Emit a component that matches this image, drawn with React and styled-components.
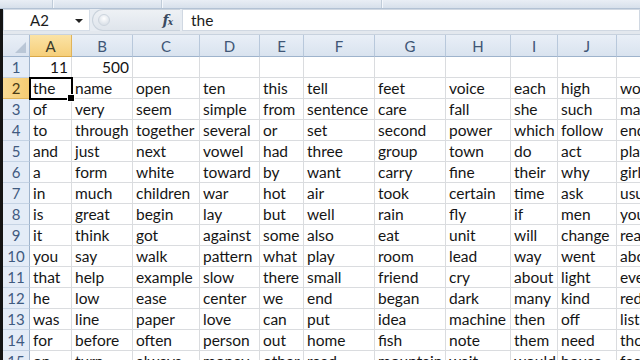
import React from "react";
import styled, { createGlobalStyle } from "styled-components";

const GlobalStyle = createGlobalStyle`
  html, body { margin: 0; padding: 0; background: #ffffff; overflow: hidden; }
  * { box-sizing: border-box; }
`;

const FONT = `"Lato", "Open Sans", "Liberation Sans", sans-serif`;

const Screen = styled.div`
  width: 640px;
  height: 360px;
  overflow: hidden;
  display: flex;
  flex-direction: column;
  background: #fff;
  font-family: ${FONT};
`;

const RibbonEdge = styled.div`
  height: 9px;
  flex: none;
  display: flex;
  background: linear-gradient(#e9eef5, #d7e0eb);
  border-bottom: 1px solid #b3c2d4;
`;

const RibbonGroup = styled.div`
  width: ${(p) => p.$w}px;
  flex: none;
  border-right: 1px solid #c0ccd9;
  box-shadow: 1px 0 0 #f4f7fb;
`;

const Body = styled.div`
  flex: 1;
  display: flex;
  flex-direction: column;
  border-left: 3px solid #141414;
  min-height: 0;
`;

const FormulaBar = styled.div`
  height: 22px;
  flex: none;
  display: flex;
  align-items: stretch;
  background: #e7ecf2;
`;

const NameBox = styled.div`
  width: 87px;
  flex: none;
  display: flex;
  align-items: center;
  background: #fff;
  border: 1px solid #d5dde7;
  padding-left: 26px;
  font-size: 15px;
  color: #1c1c1c;
  position: relative;
`;

const DropArrow = styled.span`
  position: absolute;
  right: 6px;
  top: 9px;
  width: 0;
  height: 0;
  border-left: 4px solid transparent;
  border-right: 4px solid transparent;
  border-top: 4px solid #222;
`;

const Splitter = styled.div`
  width: 88px;
  flex: none;
  display: flex;
  align-items: center;
  justify-content: flex-end;
  padding-right: 8px;
  margin-left: 2px;
  border-radius: 11px 0 0 11px;
  background: linear-gradient(#eef1f5, #dfe5ec);
  border: 1px solid #c9d2dc;
  border-right: none;
  position: relative;
`;

const Grip = styled.span`
  position: absolute;
  left: 5px;
  top: 4px;
  width: 12px;
  height: 12px;
  border-radius: 50%;
  background: radial-gradient(circle at 50% 35%, #ffffff, #dde3ea 70%);
  border: 1px solid #cdd5de;
`;

const Fx = styled.span`
  font-family: "DejaVu Serif", "Liberation Serif", serif;
  font-style: italic;
  font-weight: bold;
  font-size: 14px;
  color: #3a4a60;
  letter-spacing: -1px;
  & small { font-size: 9px; }
`;

const Input = styled.div`
  flex: 1;
  display: flex;
  align-items: center;
  background: #fff;
  border: 1px solid #d0d8e2;
  margin-left: 2px;
  padding-left: 8px;
  font-size: 15.5px;
  color: #1c1c1c;
`;

const BarGap = styled.div`
  height: 4px;
  flex: none;
  background: #e3e8ee;
  border-bottom: 1px solid #c8d2de;
`;

const Sheet = styled.div`
  display: grid;
  grid-template-columns: ${(p) => p.$cols};
  grid-template-rows: 22px;
  grid-auto-rows: 21px;
`;

const Corner = styled.div`
  background: linear-gradient(#e9eff7, #dbe4f0);
  border-right: 1px solid #a9bcd3;
  border-bottom: 1px solid #9eb3cc;
  position: relative;
  &::after {
    content: "";
    position: absolute;
    right: 3px;
    bottom: 3px;
    width: 0;
    height: 0;
    border-left: 11px solid transparent;
    border-bottom: 11px solid #b9c6d6;
  }
`;

const ColHead = styled.div`
  display: flex;
  align-items: center;
  justify-content: center;
  font-size: 15px;
  color: ${(p) => (p.$active ? "#3b3b2a" : "#3f5676")};
  background: ${(p) =>
    p.$active
      ? "linear-gradient(#fbe3a6, #f6cf7a)"
      : "linear-gradient(#e9eff7, #d9e3ef)"};
  border-right: 1px solid ${(p) => (p.$active ? "#e0b45a" : "#b8c8db")};
  border-bottom: 1px solid ${(p) => (p.$active ? "#d9a848" : "#9eb3cc")};
`;

const RowHead = styled.div`
  display: flex;
  align-items: center;
  justify-content: center;
  font-size: 15px;
  color: ${(p) => (p.$active ? "#4a3b16" : "#3f5a80")};
  background: ${(p) =>
    p.$active ? "linear-gradient(90deg, #f9db95, #f5cb72)" : "#e4ecf7"};
  border-right: 1px solid ${(p) => (p.$active ? "#d9a848" : "#9eb3cc")};
  border-bottom: 1px solid ${(p) => (p.$active ? "#e0b45a" : "#c5d3e4")};
`;

const Cell = styled.div`
  font-size: 15.5px;
  line-height: 21px;
  color: #151515;
  padding: 0 3px;
  white-space: nowrap;
  overflow: visible;
  text-align: ${(p) => (p.$num ? "right" : "left")};
  border-right: 1px solid #dadcdf;
  border-bottom: 1px solid #dadcdf;
  position: relative;
  z-index: ${(p) => (p.$selected ? 2 : 0)};
  ${(p) =>
    p.$selected &&
    `
    outline: 2px solid #000;
    outline-offset: -1px;
    &::after {
      content: "";
      position: absolute;
      right: -4px;
      bottom: -4px;
      width: 6px;
      height: 6px;
      background: #000;
      border: 1px solid #fff;
    }
  `}
`;

const COLS = ["A", "B", "C", "D", "E", "F", "G", "H", "I", "J", "K"];
const WIDTHS = [42, 61, 67, 60, 44, 71, 71, 65, 47, 59, 60];

const DATA = [
  ["11", "500"],
  ["the", "name", "open", "ten", "this", "tell", "feet", "voice", "each", "high", "word"],
  ["of", "very", "seem", "simple", "from", "sentence", "care", "fall", "she", "such", "make"],
  ["to", "through", "together", "several", "or", "set", "second", "power", "which", "follow", "end"],
  ["and", "just", "next", "vowel", "had", "three", "group", "town", "do", "act", "play"],
  ["a", "form", "white", "toward", "by", "want", "carry", "fine", "their", "why", "girl"],
  ["in", "much", "children", "war", "hot", "air", "took", "certain", "time", "ask", "usual"],
  ["is", "great", "begin", "lay", "but", "well", "rain", "fly", "if", "men", "young"],
  ["it", "think", "got", "against", "some", "also", "eat", "unit", "will", "change", "ready"],
  ["you", "say", "walk", "pattern", "what", "play", "room", "lead", "way", "went", "above"],
  ["that", "help", "example", "slow", "there", "small", "friend", "cry", "about", "light", "ever"],
  ["he", "low", "ease", "center", "we", "end", "began", "dark", "many", "kind", "red"],
  ["was", "line", "paper", "love", "can", "put", "idea", "machine", "then", "off", "list"],
  ["for", "before", "often", "person", "out", "home", "fish", "note", "them", "need", "though"],
  ["on", "turn", "always", "money", "other", "read", "mountain", "wait", "would", "house", "feel"],
];

export default function App() {
  const template = `27px ${WIDTHS.map((w) => w + "px").join(" ")}`;
  return (
    <Screen>
      <GlobalStyle />
      <RibbonEdge>
        <RibbonGroup $w={53} />
        <RibbonGroup $w={109} />
        <RibbonGroup $w={220} />
      </RibbonEdge>
      <Body>
        <FormulaBar>
          <NameBox>
            A2
            <DropArrow />
          </NameBox>
          <Splitter>
            <Grip />
            <Fx>
              f<small>x</small>
            </Fx>
          </Splitter>
          <Input>the</Input>
        </FormulaBar>
        <BarGap />
        <Sheet $cols={template}>
          <Corner />
          {COLS.map((c) => (
            <ColHead key={c} $active={c === "A"}>
              {c}
            </ColHead>
          ))}
          {DATA.map((row, r) => (
            <React.Fragment key={r}>
              <RowHead $active={r === 1}>{r + 1}</RowHead>
              {COLS.map((c, ci) => (
                <Cell
                  key={c}
                  $num={r === 0}
                  $selected={r === 1 && ci === 0}
                >
                  {row[ci] || ""}
                </Cell>
              ))}
            </React.Fragment>
          ))}
        </Sheet>
      </Body>
    </Screen>
  );
}
